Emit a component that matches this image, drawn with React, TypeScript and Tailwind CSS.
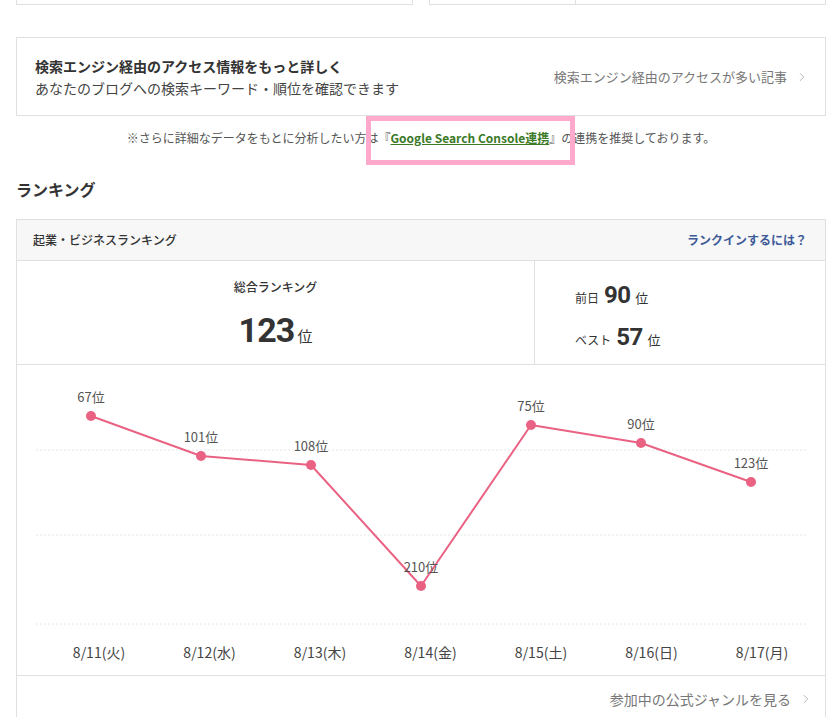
import { ChevronRight } from "lucide-react";

const points = [
  { date: "8/11(火)", rank: 67, y: 51 },
  { date: "8/12(水)", rank: 101, y: 91 },
  { date: "8/13(木)", rank: 108, y: 100 },
  { date: "8/14(金)", rank: 210, y: 221 },
  { date: "8/15(土)", rank: 75, y: 60 },
  { date: "8/16(日)", rank: 90, y: 78 },
  { date: "8/17(月)", rank: 123, y: 117 },
];

const FONT = { fontFamily: '"Noto Sans CJK JP", "Noto Sans", sans-serif' };
const NUM_FONT = { fontFamily: 'Roboto, "Liberation Sans", sans-serif' };

function RankChart() {
  const xs = points.map((_, i) => 74 + i * 110);
  const path = points.map((p, i) => `${i === 0 ? "M" : "L"}${xs[i]} ${p.y}`).join(" ");
  return (
    <svg width="808" height="310" viewBox="0 0 808 310" className="block">
      {[85, 170, 259].map((y) => (
        <line key={y} x1="19" x2="789" y1={y} y2={y} stroke="#e6e6e6" strokeWidth="1" strokeDasharray="2 2" />
      ))}
      <path d={path} fill="none" stroke="#ea6283" strokeWidth="2" strokeLinejoin="round" />
      {points.map((p, i) => (
        <g key={p.date}>
          <circle cx={xs[i]} cy={p.y} r="5" fill="#ea6283" />
          <text x={xs[i]} y={p.y - 14} textAnchor="middle" fontSize="13" fill="#555" style={FONT}>
            {p.rank}位
          </text>
          <text x={82 + i * 110.5} y="293" textAnchor="middle" fontSize="14" fill="#444" style={FONT}>
            {p.date}
          </text>
        </g>
      ))}
    </svg>
  );
}

export default function App() {
  return (
    <div className="min-h-[717px] bg-white pl-4 pr-[13px] text-[#333]" style={FONT}>
      {/* Cut-off cards above */}
      <div className="grid grid-cols-2 gap-4">
        <div className="h-[5px] border-x border-b border-[#e0e0e0]" />
        <div className="flex h-[5px] border-x border-b border-[#e0e0e0]">
          <div className="w-[146px] border-r border-[#e0e0e0]" />
        </div>
      </div>

      {/* Search console promo */}
      <div className="mt-8 flex h-[79px] items-center justify-between border border-[#e0e0e0] pl-[18px] pr-4">
        <div>
          <p className="text-[14px] font-bold leading-[22px] text-[#333]">検索エンジン経由のアクセス情報をもっと詳しく</p>
          <p className="text-[14px] leading-[22px] text-[#444]">あなたのブログへの検索キーワード・順位を確認できます</p>
        </div>
        <a className="flex items-center gap-2 text-[13px] text-[#777]">
          検索エンジン経由のアクセスが多い記事
          <ChevronRight className="h-[14px] w-[14px] text-[#aaa]" strokeWidth={1.5} />
        </a>
      </div>

      <p className="mt-[13px] text-center text-[12px] leading-[18px] text-[#555]">
        ※さらに詳細なデータをもとに分析したい方は
        <span className="relative inline-block">
          <span className="absolute -bottom-[18px] -left-[12px] -right-[14px] -top-[13px] border-[5px] border-[#ffaacc]" />
          『<a className="font-bold text-[#3b7a27] underline">Google Search Console連携</a>』
        </span>
        の連携を推奨しております。
      </p>

      <h2 className="mt-[30px] text-[16px] font-bold leading-[24px] text-[#333]">ランキング</h2>

      {/* Ranking card */}
      <div className="mt-[18px] border border-[#e0e0e0]">
        <div className="flex h-[41px] items-center justify-between border-b border-[#e0e0e0] bg-[#f7f7f7] pl-4 pr-[18px]">
          <span className="text-[12px] font-medium text-[#333]">起業・ビジネスランキング</span>
          <a className="text-[12px] font-bold text-[#3d5a98]">ランクインするには？</a>
        </div>

        <div className="flex h-[104px] border-b border-[#e0e0e0]">
          <div className="flex w-[518px] flex-col items-center border-r border-[#e0e0e0] pt-[18px]">
            <span className="text-[12px] font-medium leading-4 text-[#333]">総合ランキング</span>
            <div className="mt-[15px] flex items-baseline gap-[3px]">
              <span className="text-[34px] font-bold leading-[40px] tracking-tight text-[#333]" style={NUM_FONT}>123</span>
              <span className="text-[15px] text-[#333]">位</span>
            </div>
          </div>
          <div className="flex flex-col gap-3 pl-10 pt-[19px]">
            <div className="flex h-[30px] items-baseline gap-[5px]">
              <span className="text-[12px] text-[#333]">前日</span>
              <span className="text-[24px] font-bold leading-[30px] tracking-tight text-[#333]" style={NUM_FONT}>90</span>
              <span className="text-[13px] text-[#333]">位</span>
            </div>
            <div className="flex h-[30px] items-baseline gap-[5px]">
              <span className="text-[12px] text-[#333]">ベスト</span>
              <span className="text-[24px] font-bold leading-[30px] tracking-tight text-[#333]" style={NUM_FONT}>57</span>
              <span className="text-[13px] text-[#333]">位</span>
            </div>
          </div>
        </div>

        <div className="border-b border-[#e0e0e0]">
          <RankChart />
        </div>

        <div className="flex h-[46px] items-center justify-end pr-3">
          <a className="flex items-center gap-2 text-[14px] text-[#777]">
            参加中の公式ジャンルを見る
            <ChevronRight className="h-[14px] w-[14px] text-[#aaa]" strokeWidth={1.5} />
          </a>
        </div>
      </div>
    </div>
  );
}
